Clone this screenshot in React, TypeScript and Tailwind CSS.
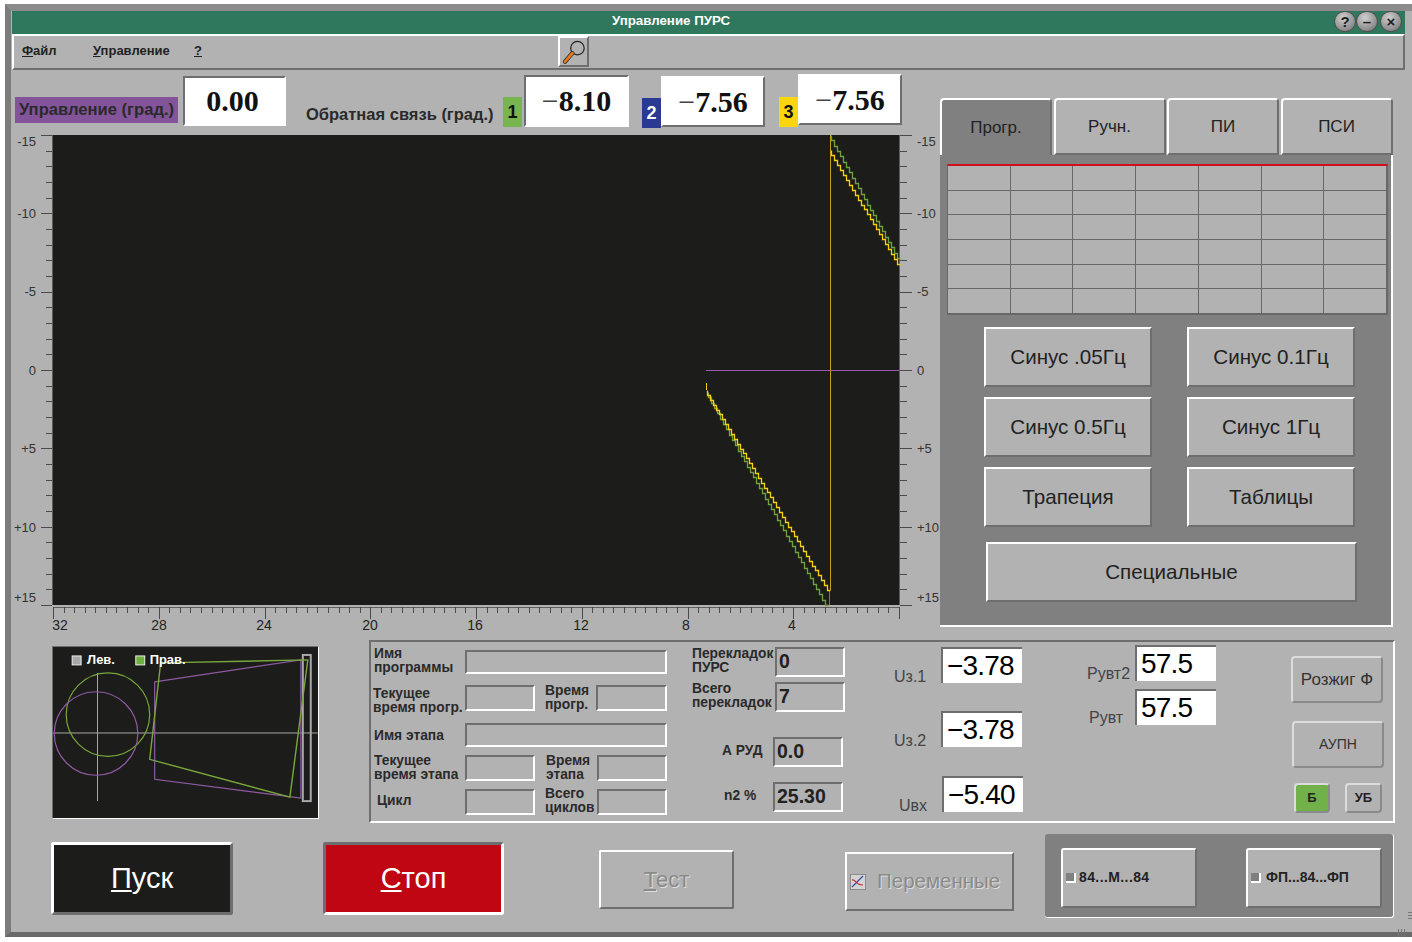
import React from "react";

const raised = "border-2 border-t-white border-l-white border-r-[#6e6e6e] border-b-[#6e6e6e]";
const soft = "border-2 border-t-[#dcdcdc] border-l-[#dcdcdc] border-r-[#8a8a8a] border-b-[#8a8a8a] rounded-[4px]";
const sunken = "border-2 border-t-[#6e6e6e] border-l-[#6e6e6e] border-r-white border-b-white";
const arial = "font-['Liberation_Sans',Arial,sans-serif]";
const serif = "font-['Liberation_Serif','Times_New_Roman',serif]";

function stairs(x0: number, y0: number, x1: number, y1: number, stepX = 3) {
  const n = Math.round((x1 - x0) / stepX);
  const dy = (y1 - y0) / n;
  let d = `M${x0 + 0.5} ${y0 + 0.5}`;
  for (let i = 1; i <= n; i++) {
    const x = x0 + i * stepX;
    const y = Math.round(y0 + i * dy);
    d += ` V${y + 0.5} H${x + 0.5}`;
  }
  return d;
}

function Chart() {
  const yt = Array.from({ length: 31 }, (_, i) => 135 + (470 / 30) * i);
  const xt = Array.from({ length: 81 }, (_, i) => 53 + (846 / 80) * i);
  const lab: [string, number][] = [
    ["-15", 141], ["-10", 213], ["-5", 291], ["0", 370], ["+5", 448], ["+10", 527], ["+15", 597],
  ];
  const xl: [string, number][] = [["32", 60], ["28", 159], ["24", 264], ["20", 370], ["16", 475], ["12", 581], ["8", 686], ["4", 792]];
  return (
    <svg viewBox="12 135 930 498" width={930} height={498} className="block ml-[1px] shrink-0" fontFamily="Liberation Sans, Arial, sans-serif">
      <rect x={53} y={135} width={846} height={470} fill="#1c1c1a" />
      <path d="M52.5 135V605M899.5 135V605M53 607.5H899" stroke="#5e5e5e" strokeWidth={1} fill="none" />
      {yt.map((y, i) => {
        const major = i % 5 === 0;
        return (
          <g key={i} stroke="#4a4a4a" strokeWidth={1}>
            <line x1={major ? 41 : 46} x2={52} y1={Math.round(y) + 0.5} y2={Math.round(y) + 0.5} />
            <line x1={900} x2={major ? 912 : 907} y1={Math.round(y) + 0.5} y2={Math.round(y) + 0.5} />
          </g>
        );
      })}
      {xt.map((x, i) => (
        <line key={i} x1={Math.round(x) + 0.5} x2={Math.round(x) + 0.5} y1={607} y2={i % 10 === 0 ? 619 : 613} stroke="#4a4a4a" />
      ))}
      {lab.map(([t, y]) => (
        <React.Fragment key={t}>
          <text x={36} y={y + 4.5} textAnchor="end" fontSize={13} fill="#333">{t}</text>
          <text x={917} y={y + 4.5} fontSize={13} fill="#333">{t}</text>
        </React.Fragment>
      ))}
      {xl.map(([t, x]) => (
        <text key={t} x={x} y={630} textAnchor="middle" fontSize={14} fontWeight={500} fill="#222">{t}</text>
      ))}
      <line x1={706} x2={899} y1={370.5} y2={370.5} stroke="#9a58b0" />
      <line x1={830.5} x2={830.5} y1={135} y2={590} stroke="#c2a214" />
      <line x1={829.5} x2={829.5} y1={590} y2={605} stroke="#5f8a3a" />
      <path d={stairs(831, 135, 899, 258)} stroke="#6fa23e" strokeWidth={1.3} fill="none" />
      <path d={stairs(831, 150, 899, 264)} stroke="#f4d010" strokeWidth={1.3} fill="none" />
      <path d={stairs(708, 392, 828, 605)} stroke="#6fa23e" strokeWidth={1.3} fill="none" />
      <path d="M706.5 383V390" stroke="#f4d010" fill="none" />
      <path d={stairs(707, 390, 829, 590)} stroke="#f4d010" strokeWidth={1.3} fill="none" />
    </svg>
  );
}

function MiniMap() {
  return (
    <div className="w-[267px] h-[173px] bg-[#1c1c1a] border-l border-t border-l-[#6e6e6e] border-t-[#6e6e6e] border-r border-b border-r-white border-b-white">
      <svg viewBox="52 646 266 172" width={265} height={171} className="block" fontFamily="Liberation Sans, Arial, sans-serif">
        <line x1={52} x2={318} y1={732.5} y2={732.5} stroke="#a8a8a8" />
        <line x1={96.5} x2={96.5} y1={672} y2={801} stroke="#a8a8a8" />
        <circle cx={107} cy={714} r={42} fill="none" stroke="#78a83c" strokeWidth={1.2} />
        <circle cx={95} cy={733} r={42} fill="none" stroke="#8f5aa4" strokeWidth={1.2} />
        <rect x={303} y={654} width={8} height={147} fill="none" stroke="#aaaaaa" strokeWidth={2} />
        <polygon points="154,681 301,659 301,798 154,779" fill="none" stroke="#8f5aa4" strokeWidth={1.2} />
        <polygon points="160,662 308,659 290,797 149,759" fill="none" stroke="#78a83c" strokeWidth={1.4} />
        <rect x={71} y={655} width={9} height={9} fill="#a8a8a8" stroke="#eee" />
        <rect x={135} y={655} width={9} height={9} fill="#6fb043" stroke="#eee" />
        <text x={86} y={663} fontSize={13} fontWeight={700} fill="#fff">Лев.</text>
        <text x={149} y={663} fontSize={13} fontWeight={700} fill="#fff">Прав.</text>
      </svg>
    </div>
  );
}

function Field({ w, h, v }: { w: number; h: number; v?: string }) {
  return (
    <div style={{ width: w, height: h }} className={`${sunken} flex items-center pl-[2px] text-[19.5px] font-bold text-[#222] leading-none shrink-0`}>
      {v}
    </div>
  );
}

function Lbl({ t, w, c = "" }: { t: string[]; w: number; c?: string }) {
  return (
    <div style={{ width: w }} className={`text-[13.8px] leading-[14px] font-bold text-[#2a2a2a] shrink-0 ${c}`}>
      {t.map((s) => <div key={s} className="whitespace-nowrap">{s}</div>)}
    </div>
  );
}

function WhiteBox({ v }: { v: string }) {
  return (
    <div className="w-[81px] h-[36px] bg-white border-t-2 border-l-2 border-t-[#6e6e6e] border-l-[#6e6e6e] pl-[4px] flex items-center text-[28px] tracking-[-0.8px] leading-none text-black shrink-0">
      {v}
    </div>
  );
}

function SerifBox({ v, minus, w, h, kind, c = "" }: { v: string; minus?: boolean; w: number; h: number; kind: string; c?: string }) {
  return (
    <div style={{ width: w, height: h }} className={`bg-white ${kind} flex items-center justify-center ${serif} text-[30px] font-bold text-[#111] leading-none shrink-0 ${c}`}>
      {minus && <span className="font-normal text-[#444]">−</span>}
      {v}
    </div>
  );
}

function SideBtn({ t, w, c = "" }: { t: string; w: number; c?: string }) {
  return (
    <div style={{ width: w }} className={`h-[60px] bg-[#b2b2b2] ${raised} flex items-center justify-center text-[20.6px] text-[#222] shrink-0 ${c}`}>
      {t}
    </div>
  );
}

function Tab({ t, active }: { t: string; active?: boolean }) {
  return (
    <div className={`w-[112px] h-[57px] rounded-t-[4px] border-t-2 border-l-2 border-r-2 border-t-white border-l-white border-r-[#6e6e6e] flex items-center justify-center pt-[1px] text-[17px] text-[#222] ${active ? "bg-[#808080]" : "border-b-2 border-b-[#6e6e6e]"}`}>
      {t}
    </div>
  );
}

function PosBtn({ t, c = "gap-[3px]" }: { t: string; c?: string }) {
  return (
    <div className={`w-[136px] h-[60px] bg-[#b2b2b2] border-2 border-t-white border-l-white border-r-[#6e6e6e] border-b-[#6e6e6e] rounded-[3px] flex items-center pl-[3px] text-[14px] font-bold text-[#222] ${c}`}>
      <span className="w-[10px] h-[10px] bg-[#808080] border-r-2 border-b-2 border-r-white border-b-white" />
      <span className="whitespace-nowrap">{t}</span>
    </div>
  );
}

export default function App() {
  return (
    <div className={`w-[1412px] h-[942px] bg-white pt-[4px] pl-[5px] overflow-hidden ${arial}`}>
      <div className="w-[1407px] h-[933px] bg-[#b2b2b2] border-l-[6px] border-l-[#7c7c7c] border-t-[7px] border-t-[#8c8c8c] border-b-[5px] border-b-[#6a6a6a] flex flex-col relative">
        {/* title */}
        <div className="ml-[1px] w-[1393px] h-[23px] bg-[#2f775d] relative flex items-center justify-center pr-[75px] pb-[4px] text-white font-bold text-[13.3px]">
          <span>Управление ПУРС</span>
          <div className="absolute left-[1322px] top-0 flex">
            {["?", "–", "×"].map((s, i) => (
              <div key={s} className={`w-[22px] h-[21px] rounded-full bg-[radial-gradient(circle_at_40%_30%,#cfcfcf,#6e6e6e)] border border-[#4c4c4c] flex items-center justify-center text-[#1e1e1e] text-[15px] font-bold leading-none ${i === 2 ? "ml-[2px]" : ""}`}>{s}</div>
            ))}
          </div>
        </div>
        {/* menu */}
        <div className={`ml-[1px] w-[1393px] h-[36px] ${raised} flex items-center pb-[2px] text-[13px] font-bold text-[#222] relative`}>
          <span className="ml-[8px] w-[71px]"><u>Ф</u>айл</span>
          <span className="w-[101px]"><u>У</u>правление</span>
          <span><u>?</u></span>
          <div className={`absolute left-[544px] top-0 w-[31px] h-[31px] ${raised} flex items-center justify-center`}>
            <svg viewBox="0 0 24 24" width={27} height={27}>
              <circle cx={15.5} cy={9} r={6} fill="none" stroke="#222" strokeWidth={1.1} />
              <path d="M11 13.5 L4.5 21" stroke="#222" strokeWidth={3.8} strokeLinecap="round" />
              <path d="M11 13.5 L4.5 21" stroke="#e07a22" strokeWidth={2.6} strokeLinecap="round" />
            </svg>
          </div>
        </div>
        {/* main */}
        <div className="flex h-[563px] mt-[3px]">
          <div className="w-[929px] shrink-0 flex flex-col">
            <div className="h-[62px] flex pl-[4px] pt-[1px]">
              <div className="mt-[23px] w-[163px] h-[26px] bg-[#84549a] text-[#2a2a2a] font-bold text-[16.6px] flex items-center justify-center whitespace-nowrap shrink-0">Управление (град.)</div>
              <SerifBox v="0.00" w={103} h={50} kind={`${sunken} pr-[4px]`} c="ml-[5px] mt-[2px]" />
              <div className="ml-[20px] mt-[28px] w-[197px] text-[16.5px] font-bold text-[#2a2a2a] whitespace-nowrap shrink-0">Обратная связь (град.)</div>
              <div className="mt-[23px] w-[19px] h-[30px] bg-[#78b54e] text-[#111] font-bold text-[18px] flex items-center justify-center shrink-0">1</div>
              <SerifBox v="8.10" minus w={105} h={52} kind={sunken} c="ml-[2px] mt-[1px]" />
              <div className="ml-[13px] mt-[24px] w-[19px] h-[30px] bg-[#2a3a93] text-white font-bold text-[18px] flex items-center justify-center shrink-0">2</div>
              <SerifBox v="7.56" minus w={104} h={51} kind={raised} c="mt-[2px]" />
              <div className="ml-[14px] mt-[23px] w-[19px] h-[30px] bg-[#fbd60f] text-[#111] font-bold text-[18px] flex items-center justify-center shrink-0">3</div>
              <SerifBox v="7.56" minus w={104} h={51} kind={raised} />
            </div>
            <Chart />
          </div>
          <div className="w-[453px] shrink-0 pt-[25px] flex flex-col relative">
            <div className="flex gap-[1.5px]">
              <Tab t="Прогр." active />
              <Tab t="Ручн." />
              <Tab t="ПИ" />
              <Tab t="ПСИ" />
            </div>
            <div className="w-[453px] h-[472px] bg-[#808080] border-r-2 border-b-2 border-r-white border-b-white pt-[9px] pl-[7px]">
              <div className="w-[441px] h-[151px] bg-[#b2b2b2] grid grid-cols-7 grid-rows-6 border border-[#686868] border-t-2 border-t-[#d0101a]">
                {Array.from({ length: 42 }, (_, i) => (
                  <div key={i} className="border-r border-b border-[#686868]" />
                ))}
              </div>
              <div className="grid grid-cols-[168px_168px] gap-x-[35px] gap-y-[10px] ml-[37px] mt-[12px]">
                {["Синус .05Гц", "Синус 0.1Гц", "Синус 0.5Гц", "Синус 1Гц", "Трапеция", "Таблицы"].map((t) => (
                  <SideBtn key={t} t={t} w={168} />
                ))}
              </div>
              <SideBtn t="Специальные" w={371} c="ml-[39px] mt-[15px]" />
            </div>
          </div>
        </div>
        {/* info */}
        <div className="flex mt-[4px] h-[183px]">
          <div className="ml-[41px] mt-[6px]"><MiniMap /></div>
          <div className={`ml-[50px] w-[1026px] h-[183px] ${sunken} relative flex`}>
            <div className="w-[300px] pl-[2px] pt-[8px] flex flex-col shrink-0">
              <div className="flex items-center h-[24px]">
                <Lbl t={["Имя", "программы"]} w={92} c="pl-[1px] mt-[-3px]" />
                <Field w={202} h={24} />
              </div>
              <div className="flex items-center h-[26px] mt-[11px]">
                <Lbl t={["Текущее", "время прогр."]} w={92} c="mt-[5px]" />
                <Field w={70} h={26} />
                <Lbl t={["Время", "прогр."]} w={61} c="pl-[10px]" />
                <Field w={71} h={26} />
              </div>
              <div className="flex items-center h-[24px] mt-[12px]">
                <Lbl t={["Имя этапа"]} w={92} c="pl-[1px] mt-[2px]" />
                <Field w={202} h={24} />
              </div>
              <div className="flex items-center h-[26px] mt-[8px]">
                <Lbl t={["Текущее", "время этапа"]} w={92} c="pl-[1px]" />
                <Field w={70} h={26} />
                <Lbl t={["Время", "этапа"]} w={62} c="pl-[11px]" />
                <Field w={70} h={26} />
              </div>
              <div className="flex items-center h-[26px] mt-[8px]">
                <Lbl t={["Цикл"]} w={92} c="pl-[4px] mt-[-2px]" />
                <Field w={70} h={26} />
                <Lbl t={["Всего", "циклов"]} w={62} c="pl-[10px] mt-[-3px]" />
                <Field w={70} h={26} />
              </div>
            </div>
            <div className="w-[180px] ml-[21px] pt-[5px] flex flex-col shrink-0">
              <div className="flex items-center h-[30px]">
                <Lbl t={["Перекладок", "ПУРС"]} w={83} c="mt-[-2px]" />
                <Field w={70} h={30} v="0" />
              </div>
              <div className="flex items-center h-[30px] mt-[5px]">
                <Lbl t={["Всего", "перекладок"]} w={83} c="mt-[-2px]" />
                <Field w={70} h={30} v="7" />
              </div>
              <div className="flex items-center h-[30px] mt-[25px]">
                <Lbl t={["А РУД"]} w={81} c="pl-[30px] mt-[-2px]" />
                <Field w={70} h={30} v="0.0" />
              </div>
              <div className="flex items-center h-[30px] mt-[15px]">
                <Lbl t={["n2 %"]} w={81} c="pl-[32px] mt-[-2px]" />
                <Field w={70} h={30} v="25.30" />
              </div>
            </div>
            <div className="ml-[22px] pt-[5px] w-[130px] flex flex-col text-[16px] text-[#444] shrink-0">
              <div className="flex items-center h-[36px]">
                <span className="w-[47px] pt-[24px] shrink-0">Uз.1</span><WhiteBox v="−3.78" />
              </div>
              <div className="flex items-center h-[36px] mt-[28px]">
                <span className="w-[47px] pt-[24px] shrink-0">Uз.2</span><WhiteBox v="−3.78" />
              </div>
              <div className="flex items-center h-[36px] mt-[29px]">
                <span className="w-[48px] pt-[24px] pl-[5px] shrink-0">Uвх</span><WhiteBox v="−5.40" />
              </div>
            </div>
            <div className="ml-[63px] pt-[3px] w-[155px] flex flex-col text-[16px] text-[#444] shrink-0">
              <div className="flex items-center h-[36px]">
                <span className="w-[48px] pt-[22px] shrink-0">Рувт2</span><WhiteBox v="57.5" />
              </div>
              <div className="flex items-center h-[36px] mt-[8px]">
                <span className="w-[48px] pt-[22px] pl-[2px] shrink-0">Рувт</span><WhiteBox v="57.5" />
              </div>
            </div>
            <div className="ml-[49px] pt-[14px] flex flex-col shrink-0">
              <div className={`w-[92px] h-[47px] ${soft} flex items-center justify-center text-[17px] text-[#333]`}>Розжиг Ф</div>
              <div className={`ml-[1px] mt-[18px] w-[92px] h-[47px] ${soft} flex items-center justify-center text-[14px] text-[#333]`}>АУПН</div>
              <div className="flex mt-[15px] ml-[3px]">
                <div className={`w-[36px] h-[30px] ${soft} bg-[#72b04a] flex items-center justify-center text-[13px] font-bold text-[#222]`}>Б</div>
                <div className={`ml-[15px] w-[37px] h-[30px] ${soft} flex items-center justify-center text-[13px] font-bold text-[#222]`}>УБ</div>
              </div>
            </div>
          </div>
        </div>
        {/* actions */}
        <div className="flex mt-[11px] items-start">
          <div className="ml-[40px] mt-[8px] w-[182px] h-[73px] bg-[#1c1c1a] border-[3px] border-t-white border-l-white border-r-[#6e6e6e] border-b-[#6e6e6e] rounded-[3px] flex items-center justify-center text-white text-[29px]"><span><u>П</u>уск</span></div>
          <div className="ml-[90px] mt-[8px] w-[181px] h-[73px] bg-[#c10613] border-[3px] border-t-[#6e6e6e] border-l-[#6e6e6e] border-r-white border-b-white rounded-[3px] flex items-center justify-center text-white text-[29px]"><span><u>С</u>топ</span></div>
          <div className={`ml-[95px] mt-[16px] w-[135px] h-[59px] ${raised} rounded-[2px] flex items-center justify-center text-[#8a8a8a] text-[22px] [text-shadow:1px_1px_0_#dedede]`}><span><u>Т</u>ест</span></div>
          <div className={`ml-[111px] mt-[18px] w-[169px] h-[59px] ${raised} flex items-center pl-[3px] gap-[11px] text-[#8a8a8a] text-[20.5px] [text-shadow:1px_1px_0_#dedede]`}>
            <svg viewBox="0 0 16 16" width={16} height={16} className="shrink-0">
              <rect x={0.5} y={0.5} width={15} height={15} fill="#d4d4d4" stroke="#555" strokeDasharray="1 1" />
              <path d="M2 13 L7 8 L13 2" stroke="#3a4fa0" fill="none" strokeWidth={1.2} />
              <path d="M2 6 C6 5 5 11 13 11" stroke="#c8242e" fill="none" strokeWidth={1.2} />
            </svg>
            <span>Переменные</span>
          </div>
          <div className="ml-[31px] w-[349px] h-[84px] bg-[#808080] rounded-[3px] border-r border-b border-r-white border-b-white flex items-center justify-between pt-[4px] pl-[16px] pr-[11px] shrink-0">
            <PosBtn t="84...М...84" c="gap-[3px] tracking-[0.4px]" />
            <PosBtn t="ФП...84...ФП" c="gap-[5px]" />
          </div>
        </div>
        {/* window resize grips */}
        <svg viewBox="0 0 30 30" width={30} height={30} className="absolute left-[1371px] bottom-[-5px]">
          <path d="M16.5 22V30M19.5 22V30M22.5 22V30" stroke="#777" />
          <path d="M26 5.5H30M26 8.5H30M26 11.5H30" stroke="#777" />
        </svg>
      </div>
    </div>
  );
}
